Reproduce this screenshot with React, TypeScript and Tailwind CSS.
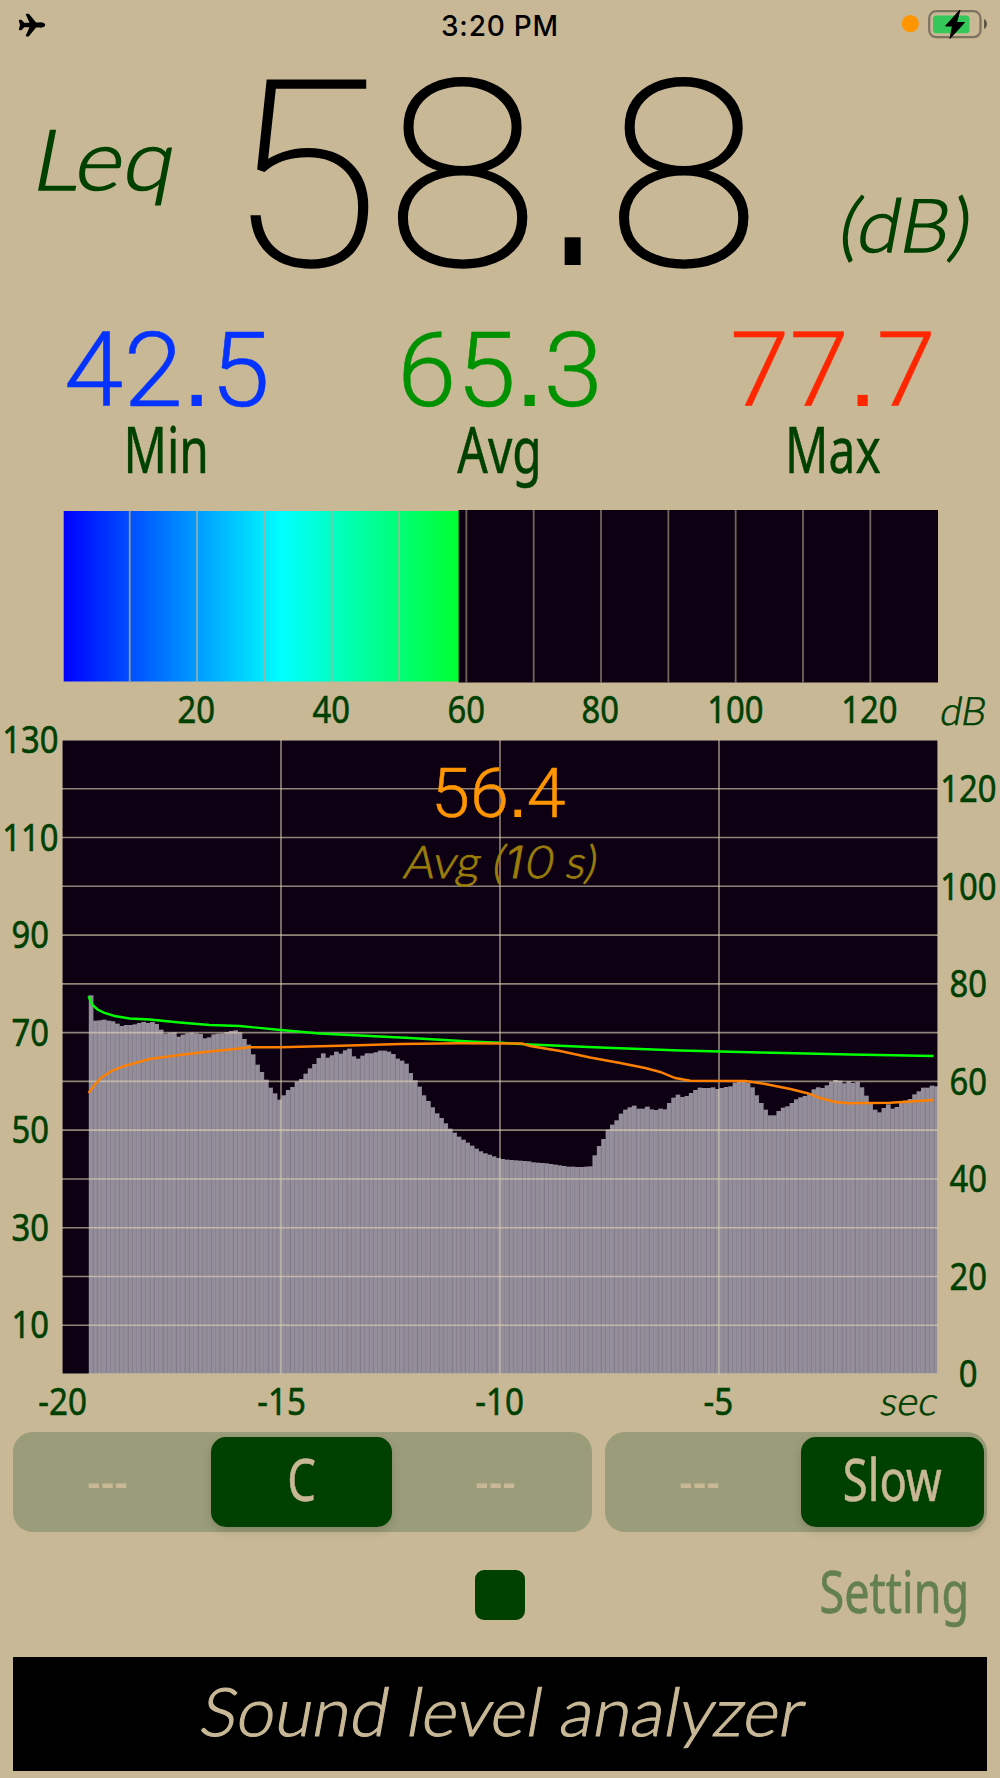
import React from 'react';
import { IoAirplane } from 'react-icons/io5';

// Bar tops of the history chart, in thirds of a pixel below the chart offset.
const OLDER = [
  46, 122, 121, 119, 122, 124, 131, 138, 135, 135, 133, 129, 126, 129, 126, 132, 149, 161, 158, 157,
  170, 164, 160, 158, 160, 162, 175, 172, 163, 161, 160, 156, 153, 151, 157, 177, 194, 223, 254, 276,
  299, 323, 340, 359, 346, 330, 321, 305, 297, 281, 265, 252, 234, 220, 233, 226, 215, 221, 211, 206,
  229, 236, 227, 220, 220, 217, 212, 212, 215, 222, 236, 242, 251, 279, 301, 320, 346, 363, 382, 400,
  414, 430, 446, 458, 470, 479, 488, 497, 506, 514, 520, 524, 529, 534,
];
const RECENT = [
  357, 359, 360, 361, 362, 363, 364, 367, 368, 369, 370, 372, 374, 376, 378, 380, 380, 381, 381, 380,
  379, 346, 318, 297, 269, 254, 241, 221, 209, 202, 197, 206, 206, 200, 208, 210, 206, 208, 189, 173,
  164, 171, 168, 159, 150, 143, 144, 144, 142, 147, 144, 141, 139, 128, 125, 126, 128, 142, 166, 189,
  209, 226, 226, 213, 203, 199, 189, 178, 172, 168, 163, 148, 142, 144, 136, 126, 120, 122, 130, 124,
  129, 126, 142, 167, 187, 209, 217, 204, 193, 206, 201, 188, 182, 177, 163, 154, 143, 143, 137, 139,
];
const BARS = [...OLDER.map((v) => 240 + v / 3), ...RECENT.map((v) => 300 + v / 3)];
const BAR_W = 4.375;

const LEQ_LINE =
  '26.5,256 28.5,261 30.5,265 35.5,269.5 42.5,273 52.5,276 67.5,278.5 87.5,279.5 117.5,282.5 147.5,285 177.5,286 218.5,290 257.5,293.5 297.5,295.5 347.5,298 407.5,301.5 437.5,302.7 467.5,304.5 537.5,307.5 617.5,310.5 697.5,312.5 787.5,314.5 870.5,316';
const AVG_LINE =
  '26.5,353 32.5,345 39.5,337.5 49.5,331 62.5,326 87.5,319 117.5,315 147.5,311.5 172.5,309 187.5,307.3 218.5,307.3 247.5,306.5 287.5,305.5 337.5,304 397.5,303.3 459.5,303.5 467.5,306 497.5,311 527.5,317.5 557.5,323 582.5,328 597.5,332 612.5,338 627.5,340.7 682.5,341 702.5,344 727.5,349 745.5,353.5 757.5,358 772.5,362 785.5,363.3 827.5,362.8 870.5,360';

const App: React.FC = () => {
  return (
    <div className="flex h-[1778px] w-[1000px] flex-col overflow-hidden bg-[#c8b896] text-[#004000]">
      <StatusBar />
      <div className="grid h-[244px] grid-cols-[212px_1fr_212px] grid-rows-[244px] items-center">
        <div className="flex justify-center pb-[28px] font-['Lato'] text-[84px] leading-none font-light [-webkit-text-stroke:1.4px]">
          <span className="inline-block scale-x-[1.1] -skew-x-[10deg]">Leq</span>
        </div>
        <div className="flex justify-center pt-[9px] pr-[8px] font-['Roboto'] text-[259px] leading-[200px] font-thin tracking-[5px] text-black [-webkit-text-stroke:2.5px]">
          <span className="inline-block scale-x-[1.08]">
            58
            <span className="-mr-[8.5px] -ml-[10.5px] inline-block origin-center scale-x-[0.6] font-['Liberation_Sans'] font-normal [-webkit-text-stroke:0px]">
              .
            </span>
            8
          </span>
        </div>
        <div className="flex justify-center pt-[103px] pl-[24px] font-['Lato'] text-[74px] leading-none font-light [-webkit-text-stroke:1.4px]">
          <span className="inline-block scale-x-[1.06] -skew-x-[10deg]">(dB)</span>
        </div>
      </div>
      <div className="mt-[27px] grid grid-cols-3">
        <Reading value="42.5" label="Min" color="text-[#0433ff]" />
        <Reading value="65.3" label="Avg" color="text-[#009100]" />
        <Reading value="77.7" label="Max" color="text-[#ff2600]" />
      </div>
      <LevelBar />
      <History />
      <Controls />
      <div className="grid h-[125px] grid-cols-3 items-center">
        <div />
        <div className="mx-auto size-[50px] rounded-[9px] bg-[#004000]" />
        <div className="flex justify-end pr-[31px] pb-[9px] font-['Noto_Sans'] text-[59px] leading-none text-[#648050] [-webkit-text-stroke:0.6px]">
          <span className="inline-block origin-right scale-x-[0.763]">Setting</span>
        </div>
      </div>
      <div className="mx-[13px] flex h-[114px] items-center justify-center bg-black pb-2 pl-2 font-['Lato'] text-[67px] leading-none font-light text-[#c8b896] [-webkit-text-stroke:1.1px]">
        <span className="inline-block scale-x-[1.023] -skew-x-[10deg]">Sound level analyzer</span>
      </div>
    </div>
  );
};

const StatusBar: React.FC = () => (
  <div className="grid h-[50px] grid-cols-3 items-center text-black">
    <IoAirplane className="ml-[18px] size-[28px]" />
    <div className="pt-px text-center font-['Inter'] text-[28px] leading-none font-medium tracking-[0.8px]">3:20 PM</div>
    <svg className="ml-auto h-[50px] w-[110px]" viewBox="0 0 110 50">
      <circle cx="20.3" cy="23.7" r="8.6" fill="#ff9500" />
      <rect x="39.2" y="11.2" width="51.3" height="26" rx="7" fill="none" stroke="#7c7260" strokeWidth="2.2" />
      <rect x="43" y="15.5" width="36.5" height="17.8" rx="3.5" fill="#34c759" />
      <path d="M94 19c4 1.5 4 8.5 0 10z" fill="#5c5446" />
      <path
        d="M70 10 55.5 26h7L60 38.5 74.5 22.5h-8z"
        fill="#000"
        stroke="#000"
        strokeWidth="1"
        strokeLinejoin="round"
      />
    </svg>
  </div>
);

// Light digits with a square decimal point.
const Digits: React.FC<{ value: string }> = ({ value }) => {
  const [whole, fraction] = value.split('.');
  return (
    <span className="inline-block scale-x-[1.03] [-webkit-text-stroke:0.5px]">
      {whole}
      <span className="-mx-[0.01em] font-['Liberation_Sans'] font-normal [-webkit-text-stroke:0px]">.</span>
      {fraction}
    </span>
  );
};

const Reading: React.FC<{ value: string; label: string; color: string }> = ({ value, label, color }) => (
  <div className="flex flex-col items-center">
    <div className={`h-[98px] font-['Roboto'] text-[104px] leading-[98px] font-light ${color}`}>
      <Digits value={value} />
    </div>
    <div className="font-['Noto_Sans'] text-[63px] leading-[60px] [-webkit-text-stroke:0.5px]">
      <span className="inline-block scale-x-[0.76]">{label}</span>
    </div>
  </div>
);

const LevelBar: React.FC = () => (
  <>
    <svg
      className="mt-[31px] ml-[62px] h-[172.5px] w-[876px] shrink-0"
      viewBox="0 0 875 172.5"
      preserveAspectRatio="none"
    >
      <defs>
        <linearGradient id="level" gradientUnits="userSpaceOnUse" x1="1.5" y1="0" x2="875" y2="0">
          <stop offset="0" stopColor="#0000ff" />
          <stop offset="0.25" stopColor="#00ffff" />
          <stop offset="0.5" stopColor="#00ff00" />
        </linearGradient>
      </defs>
      <rect x="1.7" y="1" width="395" height="170.5" fill="url(#level)" />
      <rect x="396.2" y="0" width="478.8" height="172.5" fill="#0c0012" />
      {Array.from({ length: 12 }, (_, i) => (
        <line
          key={i}
          x1={(i + 1) * 67.25 + 0.4}
          x2={(i + 1) * 67.25 + 0.4}
          y1="0"
          y2="172.5"
          stroke={i < 5 ? '#b0b098' : '#c8b896'}
          strokeOpacity={i < 5 ? 0.8 : 0.55}
          strokeWidth="1.8"
        />
      ))}
    </svg>
    <div className="flex h-[57.5px] pl-[129.5px] font-['Noto_Sans'] text-[39px] leading-[50px] [-webkit-text-stroke:0.6px]">
      {[20, 40, 60, 80, 100, 120].map((n) => (
        <div key={n} className="flex w-[134.6px] shrink-0 justify-center">
          <span className="inline-block scale-x-[0.84]">{n}</span>
        </div>
      ))}
      <div className="shrink-0 pl-[4px] font-['Lato'] leading-[55px] font-light [-webkit-text-stroke:0.7px]">
        <span className="inline-block -skew-x-[10deg]">dB</span>
      </div>
    </div>
  </>
);

const History: React.FC = () => (
  <>
    <div className="flex h-[634px] shrink-0 font-['Noto_Sans'] text-[39px]">
      <div className="-mt-[51px] flex w-[61px] shrink-0 flex-col [-webkit-text-stroke:0.6px]">
        {[130, 110, 90, 70, 50, 30, 10].map((n) => (
          <AxisLabel key={n} value={n} />
        ))}
      </div>
      <div className="relative ml-px w-[876px] shrink-0">
        <svg className="block h-[634px] w-[876px]" viewBox="0 0 875 634" preserveAspectRatio="none">
          <rect width="875" height="634" fill="#0c0012" />
          {BARS.map((top, i) => (
            <React.Fragment key={i}>
              <rect x={(i + 6) * BAR_W + 0.5} y={top} width={BAR_W + 0.1} height={634 - top} fill="#948d9a" />
              <rect x={(i + 7) * BAR_W - 0.1} y={top} width="0.7" height={634 - top} fill="#88828f" />
            </React.Fragment>
          ))}
          {Array.from({ length: 14 }, (_, i) => (
            <line
              key={i}
              x1="0"
              x2="875"
              y1={i * 48.77}
              y2={i * 48.77}
              stroke="#e0d4b4"
              strokeOpacity="0.62"
              strokeWidth="1.6"
            />
          ))}
          {[0, 218.75, 437.5, 656.25, 875].map((x) => (
            <line key={x} x1={x} x2={x} y1="0" y2="634" stroke="#e0d4b4" strokeOpacity="0.62" strokeWidth="1.6" />
          ))}
          <polyline points={LEQ_LINE} fill="none" stroke="#00ff00" strokeWidth="2.4" />
          <polyline points={AVG_LINE} fill="none" stroke="#ff8000" strokeWidth="2.4" />
        </svg>
        <div className="absolute inset-x-0 top-[18px] flex flex-col items-center">
          <div className="h-[70px] pr-[3px] font-['Roboto'] text-[68px] leading-[71px] font-light text-[#ff9500]">
            <Digits value="56.4" />
          </div>
          <div className="pl-[3px] font-['Lato'] text-[45px] leading-[66px] font-light text-[#9a7d0a] [-webkit-text-stroke:0.8px]">
            <span className="inline-block scale-x-[1.04] -skew-x-[10deg]">
              Avg (<span className="mr-[3px] font-['Inter'] text-[44px]">1</span>0 s)
            </span>
          </div>
        </div>
      </div>
      <div className="-mt-[2px] flex w-[61px] shrink-0 flex-col [-webkit-text-stroke:0.6px]">
        {[120, 100, 80, 60, 40, 20, 0].map((n) => (
          <AxisLabel key={n} value={n} />
        ))}
      </div>
    </div>
    <div className="flex h-[58px] shrink-0 font-['Noto_Sans'] text-[39px] leading-[52px]">
      <div className="-ml-[47px] flex [-webkit-text-stroke:0.6px]">
        {['-20', '-15', '-10', '-5'].map((t) => (
          <div key={t} className="flex w-[218.75px] justify-center">
            <span className="inline-block scale-x-[0.85]">{t}</span>
          </div>
        ))}
      </div>
      <div className="ml-[54px] font-['Lato'] font-light [-webkit-text-stroke:0.7px]">
        <span className="inline-block scale-x-[1.03] -skew-x-[10deg]">sec</span>
      </div>
    </div>
  </>
);

const AxisLabel: React.FC<{ value: number }> = ({ value }) => (
  <div className="flex h-[97.54px] shrink-0 items-center justify-center leading-none">
    <span className="inline-block scale-x-[0.84]">{value}</span>
  </div>
);

const Controls: React.FC = () => (
  <div className="flex h-[100px] shrink-0 gap-[13px] px-[13px] font-['Noto_Sans'] text-[59px] leading-none text-[#c8b896] [-webkit-text-stroke:0.6px]">
    <div className="flex w-[579px] items-center rounded-[20px] bg-[#9b9c79]">
      <Dashes className="w-[189px]" />
      <Selected className="ml-[9px] w-[181px]" label="C" />
      <Dashes className="ml-[9px] w-[189px]" />
    </div>
    <div className="flex w-[382px] items-center rounded-[20px] bg-[#9b9c79]">
      <Dashes className="w-[189px]" />
      <Selected className="ml-[7px] w-[183px]" label="Slow" />
    </div>
  </div>
);

const Selected: React.FC<{ className: string; label: string }> = ({ className, label }) => (
  <div
    className={`flex h-[90px] items-center justify-center rounded-[15px] bg-[#004000] pb-2 shadow-[0_4px_10px_rgba(0,0,0,0.15)] ${className}`}
  >
    <span className="inline-block scale-x-[0.77]">{label}</span>
  </div>
);

const Dashes: React.FC<{ className: string }> = ({ className }) => (
  <div className={`flex justify-center pb-2 [-webkit-text-stroke:0px] ${className}`}>
    <span className="inline-block scale-x-[0.72]">---</span>
  </div>
);

export default App;
